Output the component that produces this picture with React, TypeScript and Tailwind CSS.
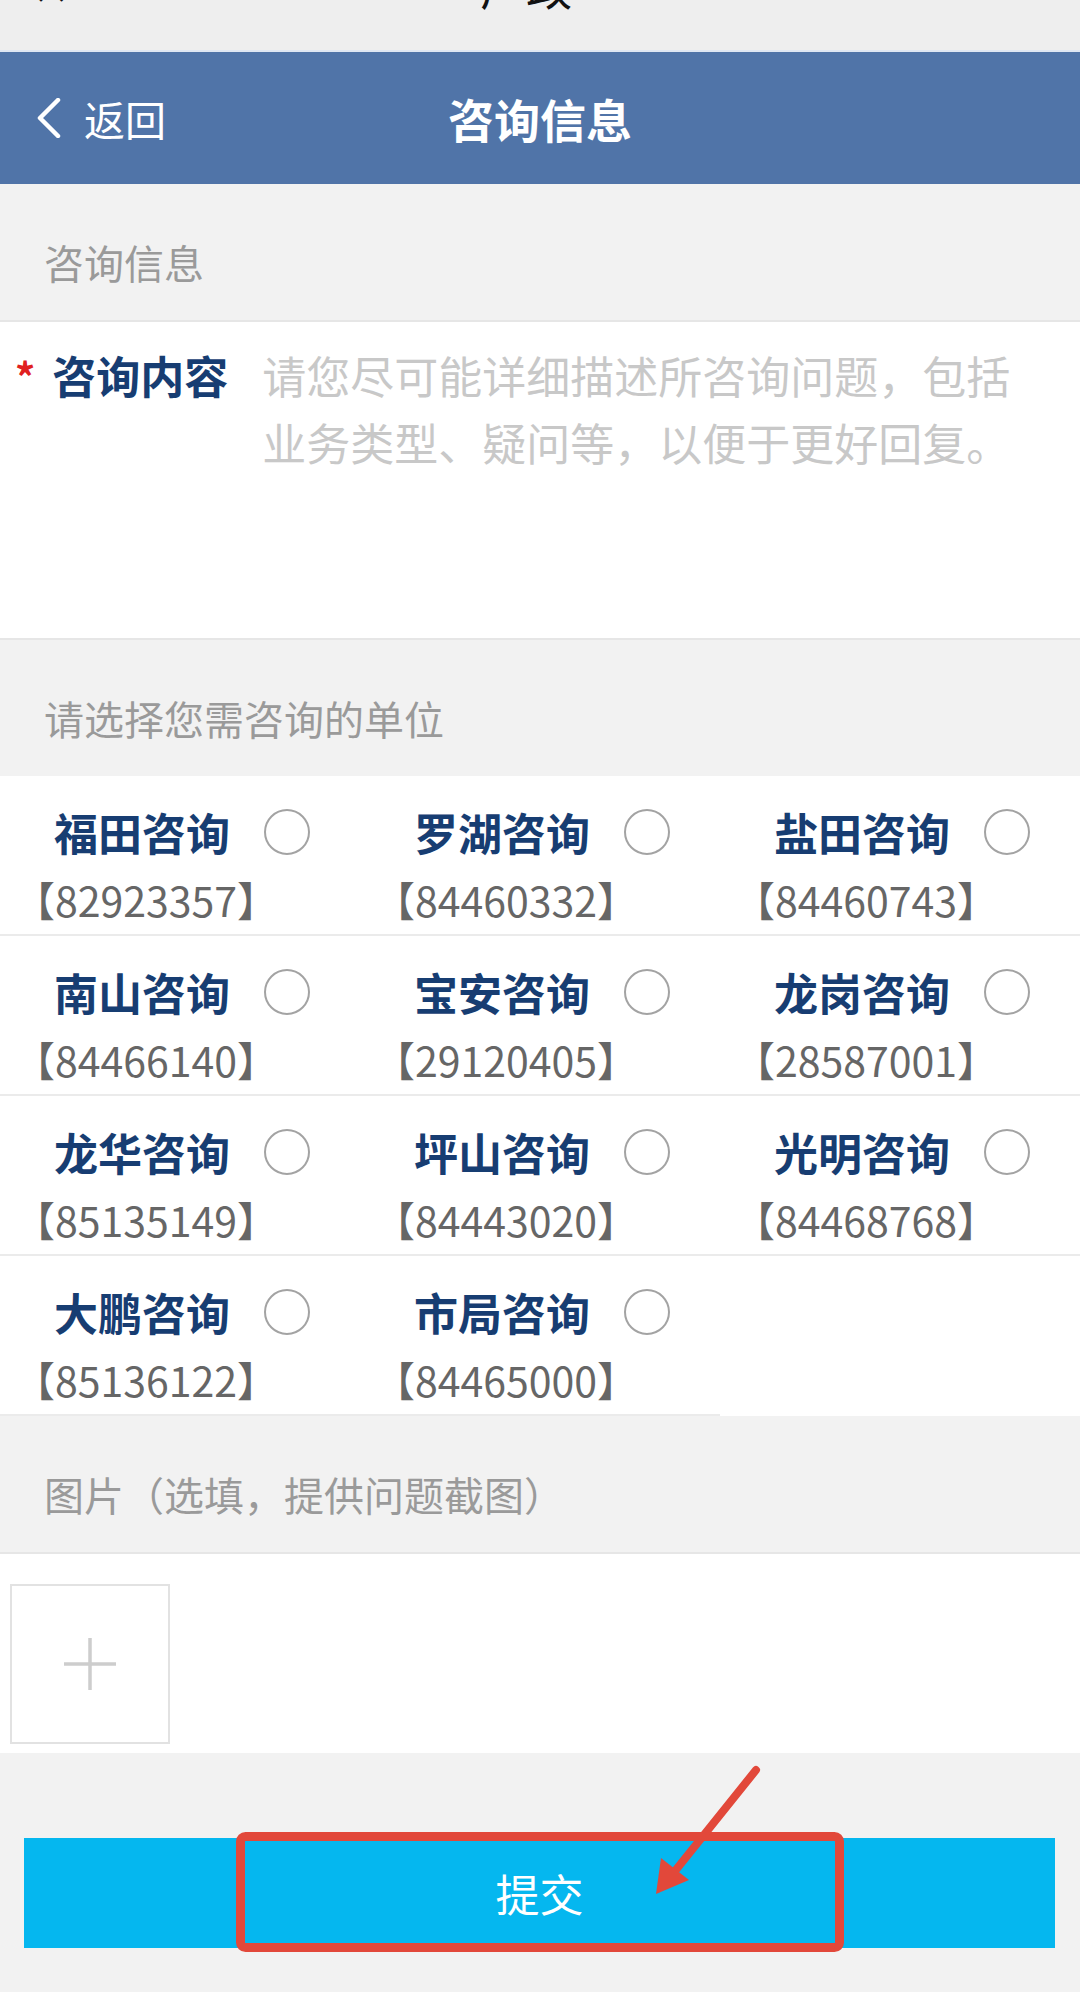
const units: [string, string][] = [
  ['福田咨询', '82923357'],
  ['罗湖咨询', '84460332'],
  ['盐田咨询', '84460743'],
  ['南山咨询', '84466140'],
  ['宝安咨询', '29120405'],
  ['龙岗咨询', '28587001'],
  ['龙华咨询', '85135149'],
  ['坪山咨询', '84443020'],
  ['光明咨询', '84468768'],
  ['大鹏咨询', '85136122'],
  ['市局咨询', '84465000'],
];

function SectionTitle({ children }: { children: React.ReactNode }) {
  return (
    <div className="h-[136px] pt-[56px] pl-[44px] text-[40px] leading-[44px] text-[#9a9a9a]">
      {children}
    </div>
  );
}

function UnitCell({ name, phone }: { name: string; phone: string }) {
  return (
    <div className="h-[160px] border-b-2 border-[#ebebeb] pt-[30px]">
      <div className="flex items-center pl-[54px]">
        <span className="text-[44px] leading-[52px] font-semibold text-[#173d72]">{name}</span>
        <span className="ml-[34px] w-[46px] h-[46px] rounded-full border-2 border-[#a3a3a3] bg-white" />
      </div>
      <div className="mt-[16px] pl-[14px] text-[41px] leading-[50px] text-[#666666]">
        【{phone}】
      </div>
    </div>
  );
}

export default function App() {
  return (
    <div className="relative w-[1080px] min-h-[1992px] bg-[#f2f2f2] font-['Noto_Sans_CJK_SC','Noto_Sans',sans-serif]">
      {/* bottom edge of the previous screen's title, cut off by the crop */}
      <div className="h-[52px] overflow-hidden bg-[#eeeeee] border-b-2 border-[#dfe7f2]">
        <div className="relative -mt-[38px] h-[46px] text-[46px] leading-[46px] text-[#111]">
          <span className="absolute left-[32px]">✕</span>
          <span className="absolute left-[480px]">广政</span>
        </div>
      </div>

      {/* header */}
      <div className="relative flex h-[132px] items-center bg-[#5074a8] text-white">
        <div className="flex items-center pl-[36px]">
          <svg width="26" height="40" viewBox="0 0 26 40" fill="none">
            <path d="M22 2 L4 20 L22 38" stroke="white" strokeWidth="4.5" strokeLinecap="round" strokeLinejoin="round" />
          </svg>
          <span className="ml-[22px] text-[41px] leading-none">返回</span>
        </div>
        <div className="absolute inset-0 flex items-center justify-center text-[46px] font-bold leading-none">
          咨询信息
        </div>
      </div>

      <SectionTitle>咨询信息</SectionTitle>

      <div className="flex h-[320px] border-y-2 border-[#e6e6e6] bg-white pt-[20px]">
        <div className="flex items-start pl-[15px]">
          <span className="mt-[14px] text-[40px] leading-[40px] font-bold text-[#e02020]">*</span>
          <span className="ml-[17px] text-[44px] leading-[67px] font-semibold text-[#173d72]">咨询内容</span>
        </div>
        <textarea
          className="ml-[34px] h-[280px] w-[776px] resize-none overflow-hidden bg-transparent text-[44px] leading-[67px] text-[#333] outline-none placeholder:text-[#c8c8c8]"
          placeholder="请您尽可能详细描述所咨询问题，包括业务类型、疑问等，以便于更好回复。"
        />
      </div>

      <SectionTitle>请选择您需咨询的单位</SectionTitle>

      <div className="grid grid-cols-3 bg-white">
        {units.map(([name, phone]) => (
          <UnitCell key={name} name={name} phone={phone} />
        ))}
      </div>

      <SectionTitle>图片（选填，提供问题截图）</SectionTitle>

      <div className="border-t-2 border-[#e6e6e6] bg-white pt-[30px] pb-[9px] pl-[10px]">
        <div className="flex h-[160px] w-[160px] items-center justify-center border-2 border-[#e2e2e2] bg-white">
          <svg width="56" height="56" viewBox="0 0 56 56">
            <path d="M28 2 V54 M2 28 H54" stroke="#cdcdcd" strokeWidth="3.5" />
          </svg>
        </div>
      </div>

      <div className="px-[24px] pt-[85px] pr-[25px]">
        <button className="flex h-[110px] w-full items-center justify-center bg-[#05b7ef] text-[44px] leading-none text-white">
          提交
        </button>
      </div>

      {/* red annotation drawn over the screenshot */}
      <svg
        className="pointer-events-none absolute left-0 top-0"
        width="1080"
        height="1992"
        viewBox="0 0 1080 1992"
      >
        <rect x="240.5" y="1836.5" width="599" height="111" rx="5" fill="none" stroke="#e2483a" strokeWidth="9" />
        <line x1="756" y1="1770" x2="671" y2="1876" stroke="#e2483a" strokeWidth="8" strokeLinecap="round" />
        <polygon points="656,1894 661,1858 689,1880" fill="#e2483a" />
      </svg>
    </div>
  );
}
